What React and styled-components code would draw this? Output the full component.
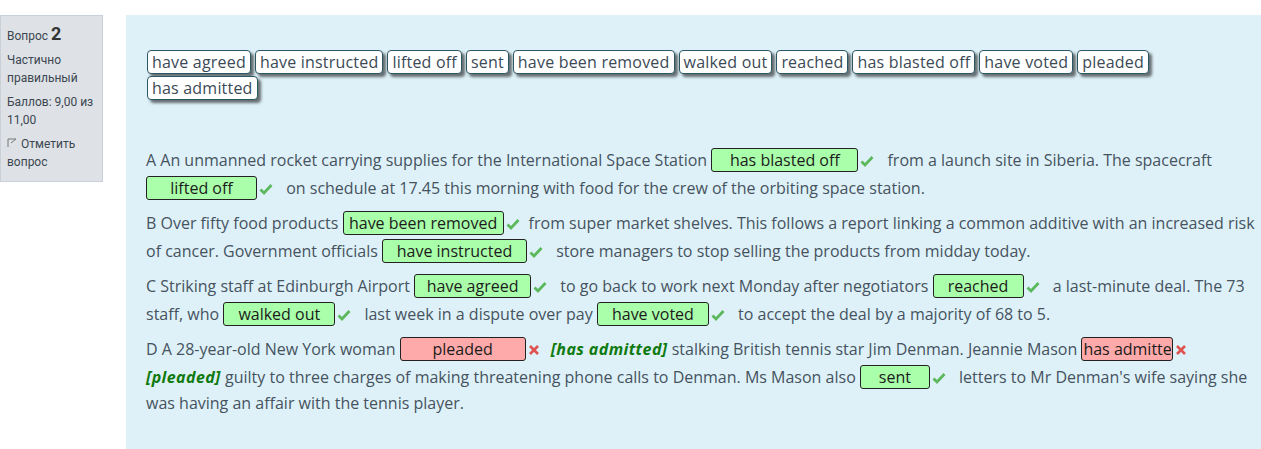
import React from "react";
import styled, { createGlobalStyle } from "styled-components";

const GlobalStyle = createGlobalStyle`
  body {
    margin: 0;
    background: #fff;
    font-family: "Open Sans", "Liberation Sans", sans-serif;
  }
`;

const Page = styled.div`
  display: flex;
  align-items: flex-start;
  padding-top: 15px;
  height: 434px;
`;

const Info = styled.div`
  width: 103px;
  flex: none;
  box-sizing: border-box;
  padding: 9px 6px 10px 6px;
  background: #dee2e6;
  border: 1px solid #cad0d7;
  font-family: Roboto, "Liberation Sans", sans-serif;
  font-size: 12px;
  line-height: 18px;
  color: #3c4650;
`;

const InfoItem = styled.div`
  margin-bottom: 6px;
  &:last-child {
    margin-bottom: 0;
  }
`;

const QNo = styled.span`
  font-size: 18px;
  font-weight: 700;
  color: #333;
`;

const Content = styled.div`
  margin-left: 23px;
  flex: 1;
  align-self: stretch;
  background: #def1f8;
  padding: 35px 0 0 20px;
  color: #46535f;
`;

const Bank = styled.div`
  display: flex;
  flex-wrap: wrap;
  gap: 2px 4px;
  width: 1030px;
  margin-left: 1px;
`;

const DragItem = styled.span`
  display: inline-block;
  background: #fff;
  border: 1px solid #2c5866;
  border-radius: 4px;
  box-shadow: 3px 3px 3px rgba(0, 0, 0, 0.55);
  padding: 0 4px;
  height: 22px;
  line-height: 22px;
  font-size: 16px;
  letter-spacing: 0.2px;
  color: #3b4a56;
  white-space: nowrap;
`;

const Text = styled.div`
  margin-top: 46px;
  width: 1115px;
  font-size: 16px;
  line-height: 25px;
`;

const Para = styled.p`
  margin: 0 0 7px 0;
`;

const Drop = styled.span`
  display: inline-block;
  box-sizing: border-box;
  width: ${(p) => p.w}px;
  height: 24px;
  line-height: 22px;
  margin: 2px 0;
  vertical-align: baseline;
  border: 1px solid #222;
  border-radius: 3px;
  background: ${(p) => (p.wrong ? "#ffaaaa" : "#aaffaa")};
  color: #1b1b1b;
  white-space: nowrap;
  padding: 0 ${(p) => (p.clip ? 1 : 4)}px;
  text-align: ${(p) => (p.clip ? "left" : "center")};
`;

const Clip = styled.span`
  display: inline-block;
  max-width: 100%;
  height: 22px;
  overflow: hidden;
  vertical-align: top;
`;

const Mark = styled.span`
  display: inline-block;
  width: 15px;
  margin: 0 ${(p) => (p.tight ? 2 : 8)}px 0 2px;
  vertical-align: -1px;
`;

const Right = styled.span`
  color: #0f7a0f;
  font-style: italic;
  font-weight: 700;
  letter-spacing: 0.4px;
`;

const Check = () => (
  <svg width="14" height="12" viewBox="0 0 14 12">
    <path d="M1.5 6.5 L5 10 L12.5 2" fill="none" stroke="#5cb85c" strokeWidth="2.8" />
  </svg>
);

const Cross = () => (
  <svg width="12" height="12" viewBox="0 0 12 12">
    <path d="M2 2 L10 10 M10 2 L2 10" fill="none" stroke="#e0524f" strokeWidth="2.6" />
  </svg>
);

const Ok = ({ w, children }) => (
  <>
    <Drop w={w}>{children}</Drop>
    <Mark>
      <Check />
    </Mark>
  </>
);

const items = [
  "have agreed",
  "have instructed",
  "lifted off",
  "sent",
  "have been removed",
  "walked out",
  "reached",
  "has blasted off",
  "have voted",
  "pleaded",
  "has admitted",
];

const Flag = () => (
  <svg width="10" height="10" viewBox="0 0 10 10" style={{ marginRight: 4 }}>
    <path d="M1 9 L1 1 L9 1 L4 5" fill="none" stroke="#777" strokeWidth="1" />
  </svg>
);

export default function App() {
  return (
    <>
      <GlobalStyle />
      <Page>
        <Info>
          <InfoItem>
            Вопрос <QNo>2</QNo>
          </InfoItem>
          <InfoItem>Частично правильный</InfoItem>
          <InfoItem>Баллов: 9,00 из 11,00</InfoItem>
          <InfoItem>
            <Flag />
            Отметить вопрос
          </InfoItem>
        </Info>
        <Content>
          <Bank>
            {items.map((t) => (
              <DragItem key={t}>{t}</DragItem>
            ))}
          </Bank>
          <Text>
            <Para>
              A An unmanned rocket carrying supplies for the International Space Station{" "}
              <Ok w={147}>has blasted off</Ok> from a launch site in Siberia. The spacecraft{" "}
              <Ok w={111}>lifted off</Ok> on schedule at 17.45 this morning with food for the crew
              of the orbiting space station.
            </Para>
            <Para>
              B Over fifty food products <Drop w={161}>have been removed</Drop>
              <Mark>
                <Check />
              </Mark>
              from super market shelves. This follows a report linking a common additive with an
              increased risk of cancer. Government officials <Ok w={145}>have instructed</Ok> store
              managers to stop selling the products from midday today.
            </Para>
            <Para>
              C Striking staff at Edinburgh Airport <Ok w={117}>have agreed</Ok> to go back to work
              next Monday after negotiators <Ok w={91}>reached</Ok> a last-minute deal. The 73
              staff, who <Ok w={112}>walked out</Ok> last week in a dispute over pay{" "}
              <Ok w={112}>have voted</Ok> to accept the deal by a majority of 68 to 5.
            </Para>
            <Para>
              D A 28-year-old New York woman{" "}
              <Drop w={126} wrong>
                pleaded
              </Drop>
              <Mark>
                <Cross />
              </Mark>
              <Right>[has admitted]</Right> stalking British tennis star Jim Denman. Jeannie Mason{" "}
              <Drop w={92} wrong clip>
                <Clip>has admitted</Clip>
              </Drop>
              <Mark tight>
                <Cross />
              </Mark>
              <Right>[pleaded]</Right> guilty to three charges of making threatening phone calls to
              Denman. Ms Mason also <Ok w={70}>sent</Ok> letters to Mr Denman's wife saying she was
              having an affair with the tennis player.
            </Para>
          </Text>
        </Content>
      </Page>
    </>
  );
}
